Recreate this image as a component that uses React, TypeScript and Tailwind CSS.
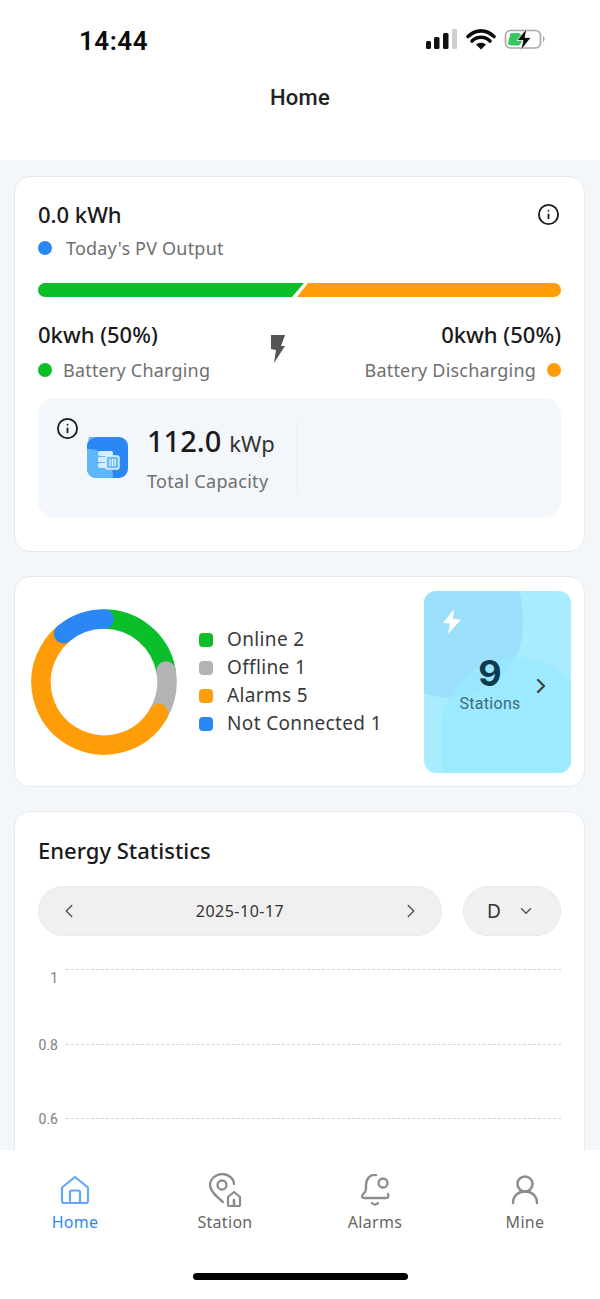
import { Info, ChevronLeft, ChevronRight, ChevronDown } from "lucide-react";

const font = "font-['Noto_Sans',sans-serif]";

function Donut() {
  const segs = [
    { c: "#0abf2a", from: 0, len: 80 },
    { c: "#b3b3b3", from: 80, len: 40 },
    { c: "#ff9d09", from: 120, len: 200 },
    { c: "#2b87f4", from: 320, len: 40 },
  ];
  return (
    <svg width="146" height="146" viewBox="0 0 146 146" className="shrink-0">
      {segs.map((s) => (
        <circle
          key={s.c}
          cx="73"
          cy="73"
          r="63"
          fill="none"
          stroke={s.c}
          strokeWidth="19.5"
          strokeLinecap="round"
          pathLength={360}
          strokeDasharray={`${s.len} 360`}
          transform={`rotate(${s.from - 90} 73 73)`}
        />
      ))}
    </svg>
  );
}

function Legend({ color, label }: { color: string; label: string }) {
  return (
    <div className="flex h-[28px] items-center">
      <span className="h-[14px] w-[14px] rounded-[4px]" style={{ backgroundColor: color }} />
      <span className="ml-[14px] text-[19px] tracking-[0.35px] text-[#3a3a3a]">{label}</span>
    </div>
  );
}

function GridLine({ label, h, labelShift }: { label: string; h: string; labelShift: string }) {
  return (
    <div className={`flex items-start ${h}`}>
      <span className={`w-[20px] text-right font-['Roboto',sans-serif] text-[14px] leading-[18px] text-[#808080] ${labelShift}`}>{label}</span>
      <div className="ml-[8px] mt-0 flex-1 border-t border-dashed border-[#d4d4d4]" />
    </div>
  );
}

function Tab({ label, active, children }: { label: string; active?: boolean; children: React.ReactNode }) {
  return (
    <div className="flex w-[150px] flex-col items-center">
      <div className="flex h-[34px] w-[40px] items-center justify-center">{children}</div>
      <span className={`mt-[4px] text-[16px] leading-[22px] tracking-[0.3px] ${active ? "text-[#2f88ee]" : "text-[#666666]"}`}>{label}</span>
    </div>
  );
}

export default function App() {
  return (
    <div className={`flex h-[1299px] w-[600px] flex-col overflow-hidden bg-[#f4f7fa] ${font}`}>
      {/* top */}
      <div className="h-[160px] shrink-0 bg-white">
        <div className="flex h-[84px] items-start justify-between pl-[79px] pr-[52px] pt-[25px]">
          <span className="font-['Roboto',sans-serif] text-[26px] font-semibold leading-[32px] tracking-[0.5px] text-[#0a0a0a]">14:44</span>
          <svg width="122" height="24" viewBox="0 0 122 24" className="mt-[3px]">
            <rect x="0" y="13" width="5" height="8" rx="1.5" fill="#111" />
            <rect x="8" y="9" width="5.5" height="12" rx="1.5" fill="#111" />
            <rect x="17" y="5" width="5.5" height="16" rx="1.5" fill="#111" />
            <rect x="26" y="1" width="5" height="20" rx="1" fill="#cfcfcf" />
            <path d="M42 8.5 C50 1,60 1,68 8.5 M46 13 C51 8,59 8,64 13" fill="none" stroke="#0a0a0a" strokeWidth="3.6" strokeLinecap="round" />
            <path d="M50 16.5 C53 14,57 14,60 16.5 L55 21.5 Z" fill="#0a0a0a" />
            <rect x="79.5" y="2.5" width="35" height="17.5" rx="5" fill="none" stroke="#a6a6a6" strokeWidth="1.6" />
            <path d="M117 8 C119 9,119 13,117 14.5 Z" fill="#a6a6a6" />
            <path d="M84 7 C84 5,85 5,87 5 L92 5 C94 5,96 7,96 11 C96 15,94 17.5,92 17.5 L87 17.5 C85 17.5,82 17.5,82 15 Z" fill="#36c75f" />
            <path d="M101 0 L91 12.5 L97 12.5 L94.5 23 L105 9.5 L99 9.5 Z" fill="#0a0a0a" stroke="#fff" strokeWidth="0.8" />
          </svg>
        </div>
        <div className="text-center font-['Roboto',sans-serif] text-[22px] font-medium leading-[28px] tracking-[0.3px] text-[#222222]">Home</div>
      </div>

      <div className="flex min-h-0 flex-1 flex-col gap-[24px] overflow-hidden pl-[14px] pr-[15px] pt-[16px]">
        {/* Card 1 */}
        <div className="h-[376px] shrink-0 rounded-[16px] border border-[#e6ebef] bg-white px-[23px] pt-[22px]">
          <div className="flex items-center justify-between">
            <span className="text-[22px] font-medium leading-[30px] text-[#1a1a1a]">0.0 kWh</span>
            <Info size={23} strokeWidth={1.9} className="mr-[1px] text-[#1a1a1a]" />
          </div>
          <div className="mt-[6px] flex h-[26px] items-center">
            <span className="h-[14px] w-[14px] rounded-full bg-[#2b87f4]" />
            <span className="ml-[14px] text-[18px] tracking-[0.2px] text-[#6f6f6f]">Today's PV Output</span>
          </div>
          <div className="mt-[22px] flex h-[14px]">
            <div className="h-full w-[266px] shrink-0 rounded-l-full bg-[#0abf2a] [clip-path:polygon(0_0,100%_0,calc(100%-12px)_100%,0_100%)]" />
            <div className="-ml-[7px] h-full flex-1 rounded-r-full bg-[#ff9d09] [clip-path:polygon(11px_0,100%_0,100%_100%,0_100%)]" />
          </div>
          <div className="mt-[22px] flex items-start justify-between">
            <div>
              <div className="text-[22px] font-medium leading-[30px] text-[#1a1a1a]">0kwh (50%)</div>
              <div className="mt-[8px] flex h-[26px] items-center">
                <span className="h-[14px] w-[14px] rounded-full bg-[#0abf2a]" />
                <span className="ml-[11px] text-[18px] tracking-[0.2px] text-[#6f6f6f]">Battery Charging</span>
              </div>
            </div>
            <svg width="16" height="30" viewBox="0 0 16 30" className="mt-[15px] ml-[-18px]">
              <path d="M1 1 L15 1 L11 12 L15 12 L4 29 L6 16 L1 15 Z" fill="#555555" />
            </svg>
            <div className="flex flex-col items-end">
              <div className="text-[22px] font-medium leading-[30px] text-[#1a1a1a]">0kwh (50%)</div>
              <div className="mt-[8px] flex h-[26px] items-center">
                <span className="text-[18px] tracking-[0.2px] text-[#6f6f6f]">Battery Discharging</span>
                <span className="ml-[11px] h-[14px] w-[14px] rounded-full bg-[#ff9d09]" />
              </div>
            </div>
          </div>
          <div className="mt-[15px] flex h-[119px] rounded-[16px] bg-[#f3f6fa]">
            <Info size={23} strokeWidth={1.9} className="ml-[18px] mt-[19px] shrink-0 text-[#1a1a1a]" />
            <div className="ml-[8px] mt-[39px] h-[41px] w-[41px] shrink-0">
              <svg width="41" height="41" viewBox="0 0 41 41">
                <rect width="41" height="41" rx="9" fill="#2b87f4" />
                <path d="M0 9 A9 9 0 0 1 9 0 L9 0 L2 0 Z M0 12 C12 12,26 16,26 41 L9 41 A9 9 0 0 1 0 32 Z" fill="#5fb7fb" />
                <rect x="11" y="14" width="15" height="5" rx="2" fill="#d6ecff" />
                <rect x="11" y="20" width="15" height="5" rx="1" fill="#d6ecff" />
                <rect x="11" y="26" width="15" height="5" rx="2" fill="#d6ecff" />
                <rect x="19" y="19" width="13" height="13" rx="2" fill="#6dbdfb" stroke="#e6f4ff" strokeWidth="1.4" />
                <path d="M23 22 V29 M25.5 22 V29 M28 22 V29" stroke="#e6f4ff" strokeWidth="1.2" />
              </svg>
            </div>
            <div className="ml-[19px] mt-[24px]">
              <div className="flex items-baseline">
                <span className="text-[29px] font-medium leading-[38px] text-[#1a1a1a]">112.0</span>
                <span className="ml-[8px] text-[22px] leading-[38px] text-[#333333]">kWp</span>
              </div>
              <div className="mt-[6px] text-[18px] leading-[26px] tracking-[0.3px] text-[#707070]">Total Capacity</div>
            </div>
            <div className="ml-[22px] mt-[25px] h-[70px] w-px bg-[#e9edf1]" />
          </div>
        </div>

        {/* Card 2 */}
        <div className="flex h-[211px] shrink-0 items-center rounded-[16px] border border-[#e6ebef] bg-white pl-[16px] pr-[13px]">
          <Donut />
          <div className="ml-[22px] flex flex-col">
            <Legend color="#0abf2a" label="Online 2" />
            <Legend color="#b3b3b3" label="Offline 1" />
            <Legend color="#ff9d09" label="Alarms 5" />
            <Legend color="#2b87f4" label="Not Connected 1" />
          </div>
          <div className="relative ml-auto flex h-[182px] w-[147px] shrink-0 items-center overflow-hidden rounded-[12px] bg-[#a9ecff]">
            <div className="absolute -left-[46px] -top-[48px] h-[155px] w-[145px] rounded-full bg-[#97daf9]/70" />
            <div className="absolute -right-[20px] top-[66px] h-[170px] w-[150px] rounded-full bg-[#97e9ff]/70" />
            <svg width="20" height="26" viewBox="0 0 20 26" className="absolute left-[18px] top-[18px]">
              <path d="M12 0 L1 14 L8 14.5 L6 25 L19 10.5 L11 10 Z" fill="#ffffff" />
            </svg>
            <div className="relative flex w-[132px] flex-col items-center pt-[2px]">
              <span className="font-['Inter',sans-serif] text-[36px] font-bold leading-[42px] text-[#0e3a50]">9</span>
              <span className="font-['Roboto',sans-serif] text-[16px] leading-[20px] tracking-[0.3px] text-[#3c6b7d]">Stations</span>
            </div>
            <ChevronRight size={24} strokeWidth={2.4} className="absolute left-[105px] top-[83px] text-[#444444]" />
          </div>
        </div>

        {/* Card 3 */}
        <div className="h-[400px] shrink-0 rounded-[16px] border border-[#e6ebef] bg-white px-[23px] pt-[22px]">
          <div className="text-[22px] font-medium leading-[32px] text-[#1a1a1a]">Energy Statistics</div>
          <div className="mt-[20px] flex justify-between">
            <div className="flex h-[50px] w-[404px] items-center justify-between rounded-full border border-[#eaeaea] bg-[#f0f0f0] px-[19px]">
              <ChevronLeft size={22} strokeWidth={1.6} className="text-[#555555]" />
              <span className="text-[16px] tracking-[0.5px] text-[#333333]">2025-10-17</span>
              <ChevronRight size={22} strokeWidth={1.6} className="text-[#555555]" />
            </div>
            <div className="flex h-[50px] w-[98px] items-center rounded-full border border-[#eaeaea] bg-[#f0f0f0] pl-[23px]">
              <span className="text-[19px] text-[#333333]">D</span>
              <ChevronDown size={18} strokeWidth={1.9} className="ml-[16px] text-[#555555]" />
            </div>
          </div>
          <div className="mt-[33px]">
            <GridLine label="1" h="h-[74.5px]" labelShift="mt-[0px]" />
            <GridLine label="0.8" h="h-[74px]" labelShift="-mt-[8px]" />
            <GridLine label="0.6" h="h-[74px]" labelShift="-mt-[8px]" />
          </div>
        </div>
      </div>

      {/* tabs */}
      <div className="flex h-[149px] shrink-0 flex-col bg-white">
        <div className="flex pt-[23px]">
          <Tab label="Home" active>
            <svg width="30" height="30" viewBox="0 0 30 30" fill="none" stroke="#63a8f5" strokeWidth="2.2" strokeLinejoin="round">
              <path d="M2 12.5 L15 2 L28 12.5 V26 A2 2 0 0 1 26 28 H4 A2 2 0 0 1 2 26 Z" />
              <path d="M10 28 V17 A1.5 1.5 0 0 1 11.5 15.5 H18.5 A1.5 1.5 0 0 1 20 17 V28" />
            </svg>
          </Tab>
          <Tab label="Station">
            <svg width="34" height="34" viewBox="0 0 34 34" fill="none" stroke="#8c8c8c" strokeWidth="2.3" strokeLinecap="round" strokeLinejoin="round">
              <path d="M15 29 C9 24,2 18,2 12 C2 6,8 1,14 1 C21 1,26 6,26 11" />
              <circle cx="14" cy="12" r="4.5" />
              <path d="M20 24 L26 19 L32 24 V32 A1 1 0 0 1 31 33 H21 A1 1 0 0 1 20 32 Z" strokeWidth="2.2" />
              <path d="M26 33 V27" strokeWidth="2.6" />
            </svg>
          </Tab>
          <Tab label="Alarms">
            <svg width="30" height="32" viewBox="0 0 30 32" fill="none" stroke="#8c8c8c" strokeWidth="2.3" strokeLinecap="round" strokeLinejoin="round">
              <path d="M16 1 C10 0,6 5,6 11 V15 C6 19,2 20,2 22 C2 24,3 24,5 24 H26 C28 24,29 23,28 20" />
              <circle cx="23" cy="9" r="4.5" />
              <path d="M12 29 C13 31,17 31,18 29" />
            </svg>
          </Tab>
          <Tab label="Mine">
            <svg width="28" height="30" viewBox="0 0 28 30" fill="none" stroke="#8c8c8c" strokeWidth="2.5" strokeLinecap="round">
              <circle cx="14" cy="9" r="7.5" />
              <path d="M2 28 C2 21,7 16.5,14 16.5 C21 16.5,26 21,26 28" />
            </svg>
          </Tab>
        </div>
        <div className="mx-auto mt-[40px] h-[7px] w-[215px] rounded-full bg-black" />
      </div>
    </div>
  );
}
